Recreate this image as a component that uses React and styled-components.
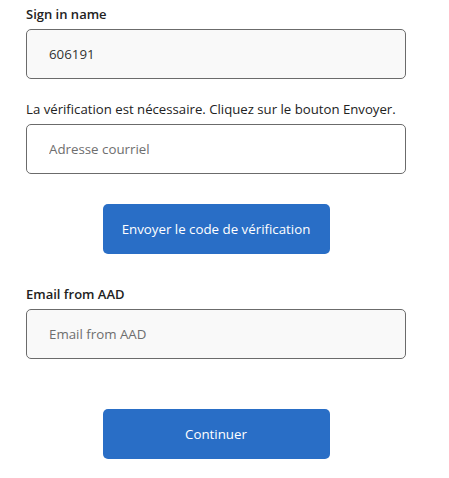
import styled, { createGlobalStyle } from 'styled-components';

const GlobalStyle = createGlobalStyle`
  body {
    margin: 0;
    background: #fff;
    font-family: "Open Sans", "Noto Sans", sans-serif;
    color: #1f1f1f;
  }
`;

const Form = styled.form`
  width: 380px;
  padding: 4px 0 0 26px;
  display: flex;
  flex-direction: column;
`;

const Label = styled.label`
  font-size: 13px;
  font-weight: 600;
  line-height: 20px;
  margin-top: ${(p) => p.$top || 0}px;
  margin-bottom: 5px;
  color: #222;
`;

const Hint = styled.p`
  font-size: 13.2px;
  line-height: 20px;
  margin: 20px 0 5px;
  color: #222;
`;

const Input = styled.input`
  box-sizing: border-box;
  width: 100%;
  height: 50px;
  padding: 0 22px;
  border: 1px solid #6b6b6b;
  border-radius: 5px;
  background: ${(p) => (p.$muted ? '#f9f9f9' : '#fff')};
  font-family: inherit;
  font-size: 13.3px;
  color: #333;
  outline: none;

  &::placeholder {
    color: #6e6e6e;
  }
`;

const Button = styled.button`
  align-self: center;
  width: 227px;
  height: 50px;
  margin-top: ${(p) => p.$top}px;
  border: none;
  border-radius: 5px;
  background: #296ec6;
  color: #fff;
  font-family: inherit;
  font-size: 13.3px;
  cursor: pointer;
`;

export default function App() {
  return (
    <>
      <GlobalStyle />
      <Form onSubmit={(e) => e.preventDefault()}>
        <Label>Sign in name</Label>
        <Input $muted defaultValue="606191" readOnly />
        <Hint>La vérification est nécessaire. Cliquez sur le bouton Envoyer.</Hint>
        <Input placeholder="Adresse courriel" />
        <Button type="button" $top={30}>Envoyer le code de vérification</Button>
        <Label $top={30}>Email from AAD</Label>
        <Input $muted placeholder="Email from AAD" />
        <Button type="submit" $top={50}>Continuer</Button>
      </Form>
    </>
  );
}
